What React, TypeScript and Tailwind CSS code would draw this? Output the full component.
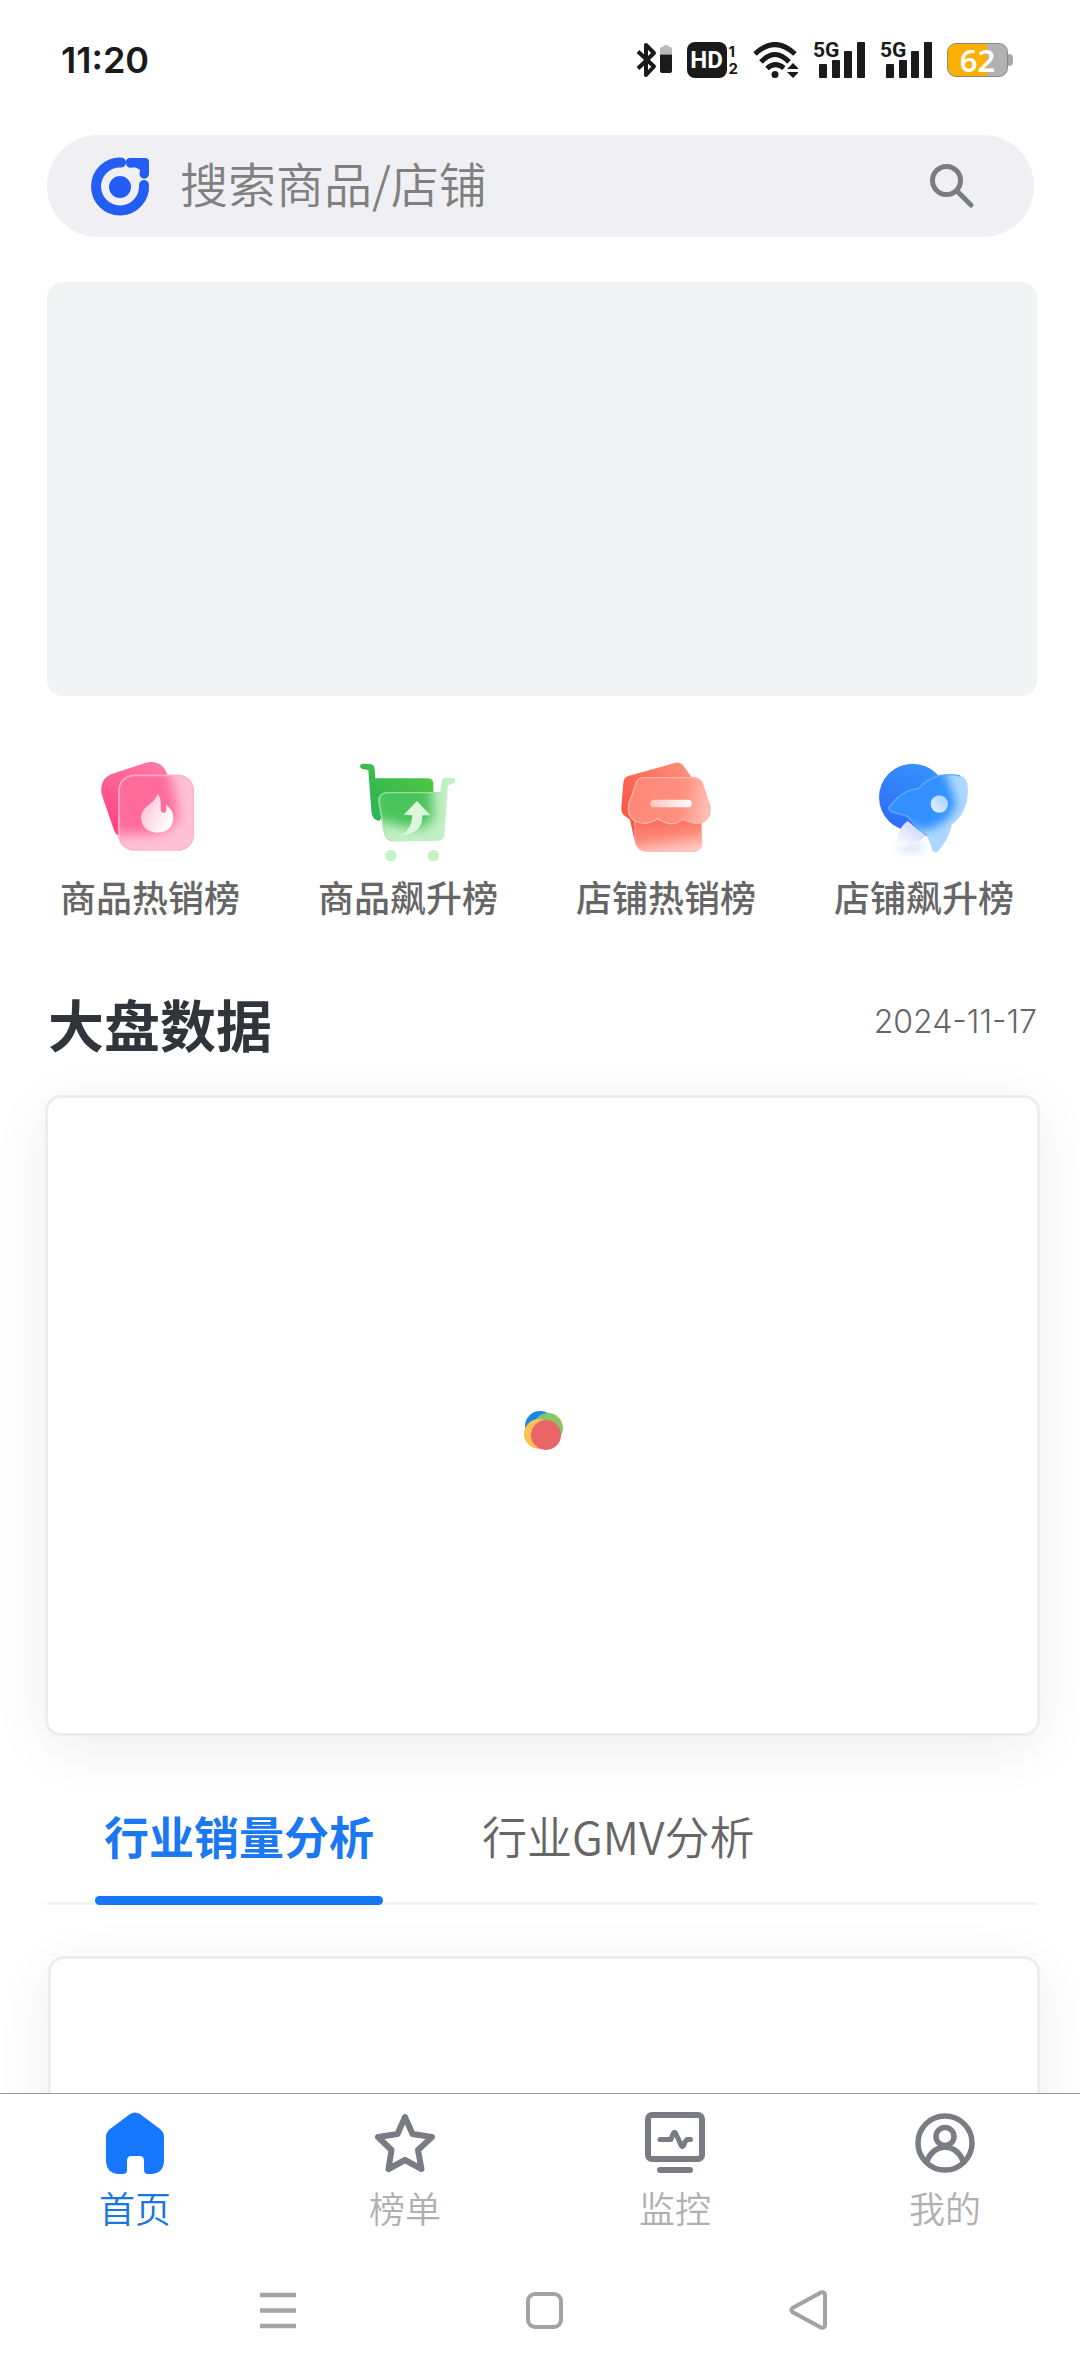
import { useState, type ReactNode } from 'react'

const pageFont = "font-['Inter','Noto_Sans_CJK_SC',sans-serif]"
const cjkFont = "font-['Noto_Sans_CJK_SC',sans-serif]"
const narrowFont = "font-['Liberation_Sans_Narrow','Roboto',sans-serif]"

interface IconEntry {
  id: string
  label: string
  icon: ReactNode
}

const shortcuts: IconEntry[] = [
  { id: 'goods-hot', label: '商品热销榜', icon: <GoodsHotIcon /> },
  { id: 'goods-rise', label: '商品飙升榜', icon: <GoodsRiseIcon /> },
  { id: 'shop-hot', label: '店铺热销榜', icon: <ShopHotIcon /> },
  { id: 'shop-rise', label: '店铺飙升榜', icon: <ShopRiseIcon /> },
]

const analysisTabs = [
  { id: 'sales', label: '行业销量分析' },
  { id: 'gmv', label: '行业GMV分析' },
]

const bottomTabs: IconEntry[] = [
  { id: 'home', label: '首页', icon: <HomeIcon /> },
  { id: 'rank', label: '榜单', icon: <StarIcon /> },
  { id: 'monitor', label: '监控', icon: <MonitorIcon /> },
  { id: 'mine', label: '我的', icon: <UserIcon /> },
]

export default function App() {
  return (
    <div className={`flex h-screen flex-col overflow-hidden bg-white ${pageFont}`}>
      <StatusBar />
      <main className="flex-1 overflow-y-auto [scrollbar-width:none]">
        <SearchBar />
        {/* Banner placeholder */}
        <div className="mt-[45px] mr-[43px] ml-[47px] h-[414px] rounded-2xl bg-[#f2f3f5]" />
        <Shortcuts />
        <MarketData />
        <Analysis />
      </main>
      <BottomTabs />
      <SystemNav />
    </div>
  )
}

// Phone status bar
function StatusBar() {
  return (
    <div className="flex h-[120px] shrink-0 items-center justify-between pr-[67px] pl-[61px] text-[#1a1a1a]">
      <time className="text-[36px] leading-10 font-semibold">11:20</time>
      <div className="flex items-center gap-[15px]">
        <svg className="h-9 w-9" viewBox="0 0 36 36" fill="none">
          <path
            d="M2 9.5 L18 24.5 L10 33 V3 L18 11 L2 26.5"
            stroke="#1a1a1a"
            strokeWidth="4"
            strokeLinejoin="round"
          />
          <path d="M24 12.500 V7 Q24 5 26 5 H27 Q27 3 30 3 T33 5 H34 Q36 5 36 7 V12.500 Z" fill="#b9b9b9" />
          <path d="M24 12.500 H36 V29 Q36 31 34 31 H26 Q24 31 24 29 Z" fill="#1a1a1a" />
        </svg>
        <div className="flex items-center gap-0.5">
          <span
            className={`flex h-9 w-10 items-center justify-center rounded-lg bg-[#1a1a1a] text-[24px] leading-none font-bold text-white ${narrowFont}`}
          >
            HD
          </span>
          <span className="flex flex-col text-[15px] leading-[17px] font-bold">
            <span>1</span>
            <span>2</span>
          </span>
        </div>
        <svg className="h-9 w-[45px]" viewBox="0 0 45 36" fill="none" stroke="#1a1a1a" strokeWidth="5">
          <path d="M2 12 Q22 -7 42 12" />
          <path d="M8 20 Q22 5 36 20" />
          <path d="M14 26.500 Q22 19 31 26" />
          <circle cx="22" cy="32.500" r="3.500" fill="#1a1a1a" stroke="none" />
          <path d="M34 27 L40 21 L46 27 Z M34 30 L40 36 L46 30 Z" fill="#1a1a1a" stroke="none" />
        </svg>
        <Signal />
        <Signal />
        <div className="flex items-center">
          <span className="flex h-[34px] w-[61px] items-center justify-center rounded-[9px] border border-[#8f8a7a] bg-linear-to-r from-[#fbb003] from-66% to-[#b2b2b2] to-66% font-['Noto_Sans',sans-serif] text-[31px] leading-none font-semibold text-white">
            62
          </span>
          <span className="h-3 w-[5px] rounded-r-sm bg-[#a8a8a8]" />
        </div>
      </div>
    </div>
  )
}

function Signal() {
  return (
    <div className="relative">
      <svg className="h-9 w-[52px]" viewBox="0 0 52 36" fill="#1a1a1a">
        <rect x="6" y="22" width="8" height="14" rx="1" />
        <rect x="19" y="18" width="8" height="18" rx="1" />
        <rect x="31" y="9" width="8" height="27" rx="1" />
        <rect x="44" y="0" width="8" height="36" rx="1" />
      </svg>
      <span className={`absolute top-0 left-0 text-[21px] leading-4 font-bold ${narrowFont}`}>5G</span>
    </div>
  )
}

function SearchBar() {
  return (
    <form
      role="search"
      onSubmit={(e) => e.preventDefault()}
      className="mt-[15px] mr-[46px] ml-[47px] flex h-[102px] items-center rounded-full bg-[#f0f0f4] pr-[58px] pl-[43px]"
    >
      <svg className="h-[60px] w-[60px] shrink-0" viewBox="0 0 60 60" fill="none">
        <path
          d="M31 6.500 A24 24 0 1 0 54 29"
          stroke="#235df3"
          strokeWidth="10"
          strokeLinecap="round"
        />
        <path
          d="M39 2 H55 Q59 2 59 6 V18 A4.500 4.500 0 0 1 49.500 18 L50 14 L46 11.500 H42 A5 5 0 0 1 39 2 Z"
          fill="#235df3"
        />
        <circle cx="30" cy="31" r="11" fill="#235df3" />
      </svg>
      <input
        type="text"
        aria-label="搜索商品/店铺"
        placeholder="搜索商品/店铺"
        className={`ml-[30px] h-full min-w-0 flex-1 bg-transparent pb-2 text-[48px] font-[350] text-[#333] outline-none placeholder:text-[#808080] ${cjkFont}`}
      />
      <button type="submit" aria-label="搜索" className="shrink-0">
        <svg className="h-12 w-12" viewBox="0 0 48 48" fill="none" stroke="#797c80" strokeLinecap="round">
          <circle cx="18.500" cy="18.500" r="14" strokeWidth="5" />
          <path d="M30 30 L43 43" strokeWidth="5" />
        </svg>
      </button>
    </form>
  )
}

function Shortcuts() {
  return (
    <nav className="mt-[62px] grid grid-cols-4 pr-[27px] pl-[21px]">
      {shortcuts.map((item) => (
        <button key={item.id} className="flex flex-col items-center gap-[9px]">
          {item.icon}
          <span className="text-[36px] leading-[48px] font-medium text-[#666]">{item.label}</span>
        </button>
      ))}
    </nav>
  )
}

function MarketData() {
  return (
    <section>
      <div className="mt-[72px] flex items-start justify-between pr-[43px] pl-12">
        <h2 className="text-[56px] leading-[64px] font-bold text-[#2f353b]">大盘数据</h2>
        <time className="text-[32px] leading-[54px] font-light text-[#666]">2024-11-17</time>
      </div>
      <div className="mt-9 mr-10 ml-[45px] flex h-[641px] items-center justify-center rounded-2xl border-3 border-[#ededed] bg-white pt-[30px] shadow-[0_12px_60px_rgba(0,0,0,0.07)]">
        {/* Loading dots */}
        <svg className="h-10 w-10" viewBox="0 0 40 40">
          <circle cx="17" cy="15" r="15" fill="#1c86e8" />
          <circle cx="25" cy="17" r="15" fill="#85c767" />
          <circle cx="16" cy="23" r="15" fill="#fac255" />
          <circle cx="23" cy="24" r="15" fill="#ea6567" />
        </svg>
      </div>
    </section>
  )
}

function Analysis() {
  const [active, setActive] = useState('sales')

  return (
    <section className="pb-16">
      <div
        role="tablist"
        className="mt-[70px] mr-[43px] ml-[47px] flex gap-[90px] px-12 shadow-[inset_0_-3px_0_#f3f3f3]"
      >
        {analysisTabs.map((tab) => {
          const selected = tab.id === active
          return (
            <button
              key={tab.id}
              role="tab"
              aria-selected={selected}
              onClick={() => setActive(tab.id)}
              className={`flex flex-col gap-[30px] text-[45px] leading-[60px] ${cjkFont} ${
                selected ? 'font-bold text-[#1a78f2]' : 'font-[350] text-[#666]'
              }`}
            >
              <span className="px-[9px]">{tab.label}</span>
              {selected && <span className="h-[9px] w-full rounded-full bg-[#1677f5]" />}
            </button>
          )
        })}
      </div>
      <div
        role="tabpanel"
        className="mt-[51px] mr-10 ml-12 h-[641px] rounded-2xl border-3 border-[#ededed] bg-white shadow-[0_12px_60px_rgba(0,0,0,0.07)]"
      />
    </section>
  )
}

function BottomTabs() {
  return (
    <nav className="relative grid shrink-0 grid-cols-4 border-t border-[#999] bg-white pt-[18px]">
      {bottomTabs.map((tab, index) => (
        <button key={tab.id} className="flex flex-col items-center gap-3">
          {tab.icon}
          <span
            className={`text-[36px] leading-[48px] font-[350] ${index === 0 ? 'text-[#1976e0]' : 'text-[#b0b0b0]'}`}
          >
            {tab.label}
          </span>
        </button>
      ))}
    </nav>
  )
}

// Android three-button navigation
function SystemNav() {
  return (
    <div className="relative shrink-0 bg-white pt-14 pb-[46px] pl-2">
      <div className="mx-auto flex w-[53%] justify-between">
        <button aria-label="最近任务">
          <svg className="h-10 w-10" viewBox="0 0 40 40" stroke="#a3a3a3" strokeWidth="4.500">
            <path d="M0 5 H36 M0 20.500 H36 M0 36 H36" />
          </svg>
        </button>
        <button aria-label="主屏幕">
          <svg className="h-10 w-10" viewBox="0 0 40 40" fill="none" stroke="#a3a3a3" strokeWidth="4">
            <rect x="4" y="4" width="33" height="33" rx="7" />
          </svg>
        </button>
        <button aria-label="返回">
          <svg className="h-10 w-10" viewBox="0 0 40 40" fill="none" stroke="#a3a3a3" strokeWidth="4">
            <path d="M4.500 18 L33 2.500 Q37 1.500 37 5 V35 Q37 38.500 33 37.500 L4.500 22 Q2 20 4.500 18 Z" />
          </svg>
        </button>
      </div>
    </div>
  )
}

// Shortcut icons
function GoodsHotIcon() {
  return (
    <svg className="h-[108px] w-[108px]" viewBox="165 235 324 324">
      <defs>
        <linearGradient id="hotBack" x1="0.8" y1="0" x2="0.200" y2="1">
          <stop offset="0" stopColor="#ff7ba6" />
          <stop offset="1" stopColor="#ff427f" />
        </linearGradient>
        <linearGradient id="flame" x1="0" y1="0" x2="1" y2="0.500">
          <stop offset="0" stopColor="#ffb8cf" />
          <stop offset="1" stopColor="#fff" />
        </linearGradient>
        <clipPath id="hotClip">
          <rect x="232" y="285" width="227" height="228" rx="48" />
        </clipPath>
        <filter id="hotBlur" x="-30%" y="-30%" width="160%" height="160%">
          <feGaussianBlur stdDeviation="17" />
        </filter>
      </defs>
      <path
        d="M210 284 L312 250 Q357 238 376 277 L420 400 L232 468 Q224 464 219 452 L182 344 Q174 300 210 284 Z"
        fill="url(#hotBack)"
      />
      <g clipPath="url(#hotClip)">
        <rect x="232" y="285" width="227" height="228" fill="#ffc0d6" />
        <path d="M200 250 H380 L412 395 Q405 455 340 462 L215 465 Z" fill="#ff6c9c" filter="url(#hotBlur)" />
      </g>
      <rect x="234" y="287" width="223" height="224" rx="46" fill="none" stroke="#ffb4cd" strokeWidth="5" opacity="0.8" />
      <path
        d="M350 343 Q362 356 359 384 Q358 399 369 399 Q379 398 375 375 Q397 390 397 415 Q394 458 349 459 Q302 457 300 413 Q301 391 324 375 Q343 362 350 343 Z"
        fill="url(#flame)"
      />
    </svg>
  )
}

function GoodsRiseIcon() {
  return (
    <svg className="h-[108px] w-[108px]" viewBox="939 235 324 324">
      <defs>
        <linearGradient id="cartBack" x1="0" y1="0.600" x2="1" y2="0">
          <stop offset="0" stopColor="#2fb457" />
          <stop offset="1" stopColor="#55c93a" />
        </linearGradient>
        <clipPath id="cartClip">
          <path d="M1036 337 H1198 L1203 300 Q1206 294 1214 295 L1240 294 Q1247 303 1240 310 L1221 317 L1210 468 Q1207 482 1192 483 L1055 486 Q1035 482 1029 462 L1012 367 Q1010 342 1036 337 Z" />
        </clipPath>
        <filter id="cartBlur" x="-30%" y="-30%" width="160%" height="160%">
          <feGaussianBlur stdDeviation="18" />
        </filter>
      </defs>
      <path
        d="M967 252 L991 254 Q1000 257 1001 268 L1003 296 H1162 Q1177 298 1177 312 V400 H1030 L1015 424 Q992 420 991 394 L982 271 L966 269 Q951 263 961 253 Z"
        fill="url(#cartBack)"
      />
      <g clipPath="url(#cartClip)">
        <rect x="1000" y="280" width="260" height="220" fill="#c2f0c4" />
        <path d="M1000 290 H1172 L1176 420 Q1150 450 1110 445 L1000 420 Z" fill="#48c35c" filter="url(#cartBlur)" />
      </g>
      <path
        d="M1198 339 H1038 Q1012 342 1014 367 L1031 462 Q1037 481 1055 484"
        fill="none"
        stroke="#a5e5a8"
        strokeWidth="4"
        opacity="0.8"
      />
      <path
        d="M1128 364 L1168 407 H1144 Q1146 463 1080 467 Q1112 450 1114 407 L1088 405 Z"
        fill="#ddf6dc"
      />
      <circle cx="1050" cy="528" r="17" fill="#c6f2c6" />
      <circle cx="1177" cy="528" r="17" fill="#c6f2c6" />
    </svg>
  )
}

function ShopHotIcon() {
  return (
    <svg className="h-[108px] w-[108px]" viewBox="153 235 324 324">
      <defs>
        <linearGradient id="shopBack" x1="1" y1="0" x2="0" y2="0.800">
          <stop offset="0" stopColor="#ff9682" />
          <stop offset="1" stopColor="#f9503f" />
        </linearGradient>
        <linearGradient id="shopBase" x1="0.300" y1="0" x2="0.600" y2="1">
          <stop offset="0" stopColor="#fc6a59" />
          <stop offset="0.500" stopColor="#fd8878" />
          <stop offset="1" stopColor="#ffc9c0" />
        </linearGradient>
        <linearGradient id="shopRoof" x1="0" y1="0.500" x2="1" y2="0.600">
          <stop offset="0" stopColor="#fe8877" />
          <stop offset="0.650" stopColor="#ff8f7f" />
          <stop offset="1" stopColor="#ffc3ba" />
        </linearGradient>
        <linearGradient id="shopBar" x1="0" y1="0" x2="1" y2="0">
          <stop offset="0" stopColor="#ffc6be" />
          <stop offset="1" stopColor="#fff" />
        </linearGradient>
      </defs>
      <path
        d="M202 289 L344 249 Q358 246 366 256 L400 305 L380 440 L220 480 L207 420 L189 407 Q181 400 181 385 L187 310 Q188 293 202 289 Z"
        fill="url(#shopBack)"
      />
      <path d="M222 420 H422 V493 Q420 513 400 515 H254 Q224 511 222 482 Z" fill="url(#shopBase)" stroke="#ffb5aa" strokeWidth="3" />
      <path
        d="M248 294 H396 Q415 294 423 309 L446 379 Q452 407 432 424 Q406 441 364 418 Q331 448 290 416 Q258 442 220 423 Q196 405 204 371 L226 308 Q234 294 248 294 Z"
        fill="url(#shopRoof)"
        stroke="#ffb0a4"
        strokeWidth="4"
      />
      <rect x="268" y="360" width="124" height="23" rx="11" fill="url(#shopBar)" />
    </svg>
  )
}

function ShopRiseIcon() {
  return (
    <svg className="h-[108px] w-[108px]" viewBox="927 235 324 324">
      <defs>
        <linearGradient id="riseBack" x1="0.800" y1="0" x2="0.300" y2="1">
          <stop offset="0" stopColor="#3595fb" />
          <stop offset="1" stopColor="#2f6cf8" />
        </linearGradient>
        <linearGradient id="riseFlame" x1="0" y1="1" x2="0.700" y2="0">
          <stop offset="0" stopColor="#fff" />
          <stop offset="1" stopColor="#c9d3fd" />
        </linearGradient>
        <linearGradient id="riseDot" x1="0" y1="1" x2="1" y2="0">
          <stop offset="0" stopColor="#e8f4ff" />
          <stop offset="1" stopColor="#9dcfff" />
        </linearGradient>
        <clipPath id="riseClip">
          <path d="M983 383 Q1022 332 1073 326 Q1122 272 1198 289 Q1221 292 1221 336 Q1218 400 1173 434 Q1163 480 1130 516 Q1122 522 1114 513 Q1108 487 1098 469 L1072 447 L1040 410 L991 396 Q980 391 983 383 Z" />
        </clipPath>
        <filter id="riseBlur" x="-30%" y="-30%" width="160%" height="160%">
          <feGaussianBlur stdDeviation="15" />
        </filter>
      </defs>
      <ellipse cx="1050" cy="503" rx="42" ry="18" fill="#d8e9f8" filter="url(#riseBlur)" />
      <circle cx="1055" cy="353" r="101" fill="url(#riseBack)" />
      <path d="M1040 424 L1094 469 Q1060 506 1011 500 Q1000 455 1040 424 Z" fill="url(#riseFlame)" />
      <g clipPath="url(#riseClip)">
        <rect x="970" y="270" width="260" height="260" fill="#add7ff" />
        <path d="M940 240 H1140 L1185 370 Q1165 440 1090 450 L940 430 Z" fill="#3091ff" filter="url(#riseBlur)" />
      </g>
      <path
        d="M1198 289 Q1122 272 1073 326 Q1022 332 985 381 Q982 391 991 396 L1040 410 L1072 447 L1098 469"
        fill="none"
        stroke="#62a9ff"
        strokeWidth="4"
      />
      <circle cx="1135" cy="373" r="26" fill="url(#riseDot)" />
    </svg>
  )
}

// Bottom tab icons
function HomeIcon() {
  return (
    <svg className="h-[62px] w-[60px]" viewBox="0 0 60 62" fill="#1677ff">
      <path d="M25 2 Q30 -1 35 2 L55 17 Q59 20 59 25 V50 Q58 61 47 62 H43 Q39 62 39 58 V49 Q39 44 35 44 H26 Q22 44 22 49 V58 Q22 62 18 62 H13 Q2 61 1 50 V25 Q1 20 5 17 Z" />
    </svg>
  )
}

function StarIcon() {
  return (
    <svg className="h-[62px] w-[60px]" viewBox="0 0 60 62" fill="none">
      <path
        d="M30 5 L37.500 22 L57 25 L43 38 L46.500 57 L30 48 L13.500 57 L16.500 38 L3 25 L22.500 22 Z"
        stroke="#797c82"
        strokeWidth="6"
        strokeLinejoin="round"
      />
    </svg>
  )
}

function MonitorIcon() {
  return (
    <svg
      className="h-[62px] w-[60px]"
      viewBox="0 0 60 62"
      fill="none"
      stroke="#797c82"
      strokeLinecap="round"
      strokeLinejoin="round"
    >
      <rect x="3" y="3" width="54" height="44" rx="4" strokeWidth="6" />
      <path d="M15 27.500 H26 Q29 17 31 22 L36 33 Q38 37 40 30 L42 27.500 H45.500" strokeWidth="5" />
      <path d="M15 58 H45" strokeWidth="6" />
    </svg>
  )
}

function UserIcon() {
  return (
    <svg className="h-[62px] w-[60px]" viewBox="0 0 60 62" fill="none" stroke="#797c82" strokeWidth="5.500">
      <circle cx="30" cy="31" r="27" />
      <circle cx="30" cy="24.500" r="9" />
      <path d="M12 49 Q17 36 30 35 Q43 36 48 49" />
    </svg>
  )
}
